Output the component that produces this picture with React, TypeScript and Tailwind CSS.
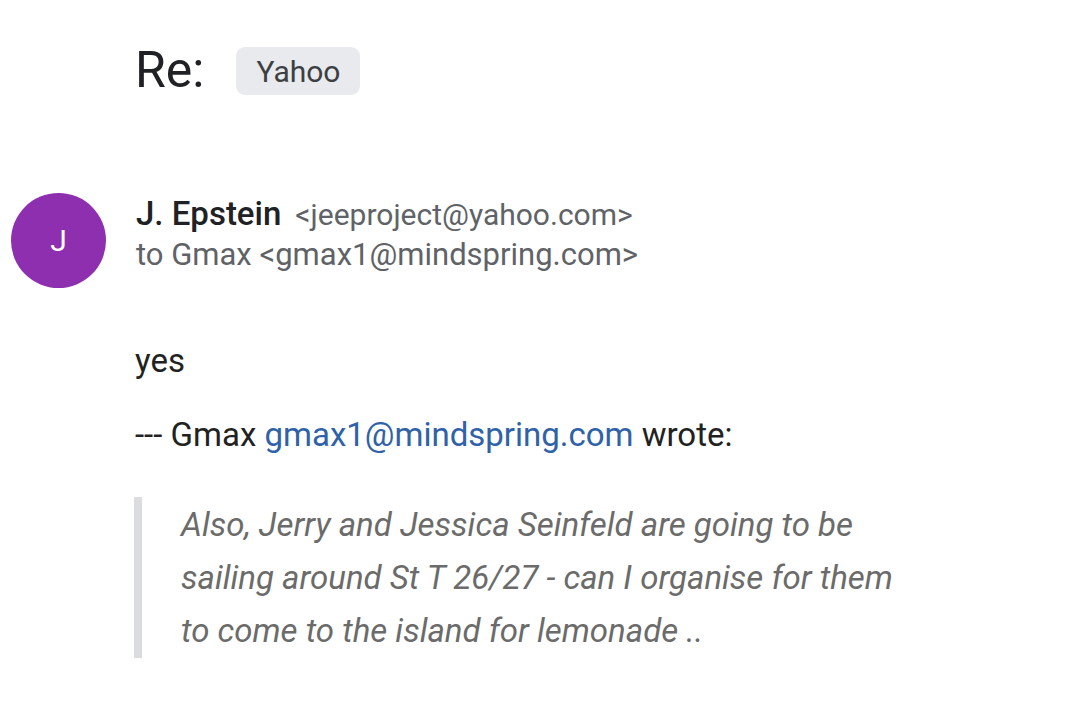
export default function App() {
  return (
    <div className="w-[1080px] h-[702px] bg-white overflow-hidden" style={{ fontFamily: 'Roboto, "Noto Sans", sans-serif' }}>
      <div className="pl-[135px] pt-[40px] flex items-center gap-[32px]">
        <h1 className="text-[50px] leading-[60px] text-[#202124] font-normal">Re:</h1>
        <span className="mt-[2px] h-[48px] px-[20px] rounded-[9px] bg-[#e8eaed] text-[#3c4043] text-[30px] flex items-center">Yahoo</span>
      </div>

      <div className="mt-[93px] pl-[11px] flex items-start">
        <div className="w-[95px] h-[95px] rounded-full bg-[#8e2fb0] text-white text-[30px] flex items-center justify-center shrink-0">J</div>
        <div className="ml-[30px] pt-[1px]">
          <div className="flex items-baseline gap-[14px] leading-[40px]">
            <span className="text-[33px] font-medium text-[#202124]">J. Epstein</span>
            <span className="text-[30px] text-[#5f6368]">&lt;jeeproject@yahoo.com&gt;</span>
          </div>
          <div className="text-[31px] leading-[40px] text-[#5f6368]">to Gmax &lt;gmax1@mindspring.com&gt;</div>
        </div>
      </div>

      <div className="pl-[135px] mt-[36px] text-[33px] text-[#222222] leading-[74px]">
        <div>yes</div>
        <div>
          --- Gmax <span className="text-[#2f62a8]">gmax1@mindspring.com</span> wrote:
        </div>
      </div>

      <div className="ml-[134px] mt-[25px] border-l-[8px] border-[#dadce0] pl-[39px] py-[1px] w-[850px]">
        <p className="italic text-[33px] leading-[53px] text-[#6b6b6b]">
          Also, Jerry and Jessica Seinfeld are going to be<br />
          sailing around St T 26/27 - can I organise for them<br />
          to come to the island for lemonade ..
        </p>
      </div>
    </div>
  );
}
